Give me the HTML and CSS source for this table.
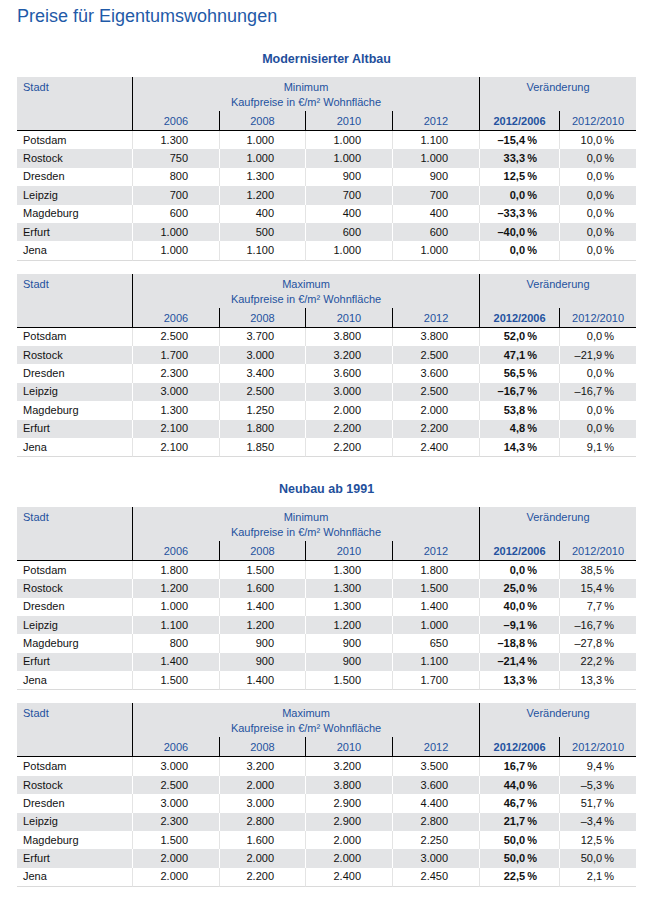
FILE: index.html
```html
<!DOCTYPE html>
<html lang="de">
<head>
<meta charset="utf-8">
<title>Preise für Eigentumswohnungen</title>
<link rel="stylesheet" href="styles.css">
</head>
<body>
<div class="page">
  <h1 class="title">Preise für Eigentumswohnungen</h1>

  <h2 class="section">Modernisierter Altbau</h2>

  <table class="pt">
    <colgroup><col class="c-city"><col class="c-y"><col class="c-y2"><col class="c-y"><col class="c-y"><col class="c-p1"><col class="c-p2"></colgroup>
    <thead>
      <tr class="hr1"><th class="th-city" rowspan="3">Stadt</th><th class="th-grp" colspan="4">Minimum</th><th class="th-chg" colspan="2" rowspan="2">Veränderung</th></tr>
      <tr class="hr2"><th class="th-grp" colspan="4">Kaufpreise in €/m² Wohnfläche</th></tr>
      <tr class="hr3"><th>2006</th><th>2008</th><th>2010</th><th>2012</th><th class="bold">2012/2006</th><th>2012/2010</th></tr>
    </thead>
    <tbody>
      <tr><td>Potsdam</td><td>1.300</td><td>1.000</td><td>1.000</td><td>1.100</td><td>–15,4&thinsp;%</td><td>10,0&thinsp;%</td></tr>
      <tr><td>Rostock</td><td>750</td><td>1.000</td><td>1.000</td><td>1.000</td><td>33,3&thinsp;%</td><td>0,0&thinsp;%</td></tr>
      <tr><td>Dresden</td><td>800</td><td>1.300</td><td>900</td><td>900</td><td>12,5&thinsp;%</td><td>0,0&thinsp;%</td></tr>
      <tr><td>Leipzig</td><td>700</td><td>1.200</td><td>700</td><td>700</td><td>0,0&thinsp;%</td><td>0,0&thinsp;%</td></tr>
      <tr><td>Magdeburg</td><td>600</td><td>400</td><td>400</td><td>400</td><td>–33,3&thinsp;%</td><td>0,0&thinsp;%</td></tr>
      <tr><td>Erfurt</td><td>1.000</td><td>500</td><td>600</td><td>600</td><td>–40,0&thinsp;%</td><td>0,0&thinsp;%</td></tr>
      <tr><td>Jena</td><td>1.000</td><td>1.100</td><td>1.000</td><td>1.000</td><td>0,0&thinsp;%</td><td>0,0&thinsp;%</td></tr>
    </tbody>
  </table>

  <table class="pt">
    <colgroup><col class="c-city"><col class="c-y"><col class="c-y2"><col class="c-y"><col class="c-y"><col class="c-p1"><col class="c-p2"></colgroup>
    <thead>
      <tr class="hr1"><th class="th-city" rowspan="3">Stadt</th><th class="th-grp" colspan="4">Maximum</th><th class="th-chg" colspan="2" rowspan="2">Veränderung</th></tr>
      <tr class="hr2"><th class="th-grp" colspan="4">Kaufpreise in €/m² Wohnfläche</th></tr>
      <tr class="hr3"><th>2006</th><th>2008</th><th>2010</th><th>2012</th><th class="bold">2012/2006</th><th>2012/2010</th></tr>
    </thead>
    <tbody>
      <tr><td>Potsdam</td><td>2.500</td><td>3.700</td><td>3.800</td><td>3.800</td><td>52,0&thinsp;%</td><td>0,0&thinsp;%</td></tr>
      <tr><td>Rostock</td><td>1.700</td><td>3.000</td><td>3.200</td><td>2.500</td><td>47,1&thinsp;%</td><td>–21,9&thinsp;%</td></tr>
      <tr><td>Dresden</td><td>2.300</td><td>3.400</td><td>3.600</td><td>3.600</td><td>56,5&thinsp;%</td><td>0,0&thinsp;%</td></tr>
      <tr><td>Leipzig</td><td>3.000</td><td>2.500</td><td>3.000</td><td>2.500</td><td>–16,7&thinsp;%</td><td>–16,7&thinsp;%</td></tr>
      <tr><td>Magdeburg</td><td>1.300</td><td>1.250</td><td>2.000</td><td>2.000</td><td>53,8&thinsp;%</td><td>0,0&thinsp;%</td></tr>
      <tr><td>Erfurt</td><td>2.100</td><td>1.800</td><td>2.200</td><td>2.200</td><td>4,8&thinsp;%</td><td>0,0&thinsp;%</td></tr>
      <tr><td>Jena</td><td>2.100</td><td>1.850</td><td>2.200</td><td>2.400</td><td>14,3&thinsp;%</td><td>9,1&thinsp;%</td></tr>
    </tbody>
  </table>

  <h2 class="section section-2">Neubau ab 1991</h2>

  <table class="pt">
    <colgroup><col class="c-city"><col class="c-y"><col class="c-y2"><col class="c-y"><col class="c-y"><col class="c-p1"><col class="c-p2"></colgroup>
    <thead>
      <tr class="hr1"><th class="th-city" rowspan="3">Stadt</th><th class="th-grp" colspan="4">Minimum</th><th class="th-chg" colspan="2" rowspan="2">Veränderung</th></tr>
      <tr class="hr2"><th class="th-grp" colspan="4">Kaufpreise in €/m² Wohnfläche</th></tr>
      <tr class="hr3"><th>2006</th><th>2008</th><th>2010</th><th>2012</th><th class="bold">2012/2006</th><th>2012/2010</th></tr>
    </thead>
    <tbody>
      <tr><td>Potsdam</td><td>1.800</td><td>1.500</td><td>1.300</td><td>1.800</td><td>0,0&thinsp;%</td><td>38,5&thinsp;%</td></tr>
      <tr><td>Rostock</td><td>1.200</td><td>1.600</td><td>1.300</td><td>1.500</td><td>25,0&thinsp;%</td><td>15,4&thinsp;%</td></tr>
      <tr><td>Dresden</td><td>1.000</td><td>1.400</td><td>1.300</td><td>1.400</td><td>40,0&thinsp;%</td><td>7,7&thinsp;%</td></tr>
      <tr><td>Leipzig</td><td>1.100</td><td>1.200</td><td>1.200</td><td>1.000</td><td>–9,1&thinsp;%</td><td>–16,7&thinsp;%</td></tr>
      <tr><td>Magdeburg</td><td>800</td><td>900</td><td>900</td><td>650</td><td>–18,8&thinsp;%</td><td>–27,8&thinsp;%</td></tr>
      <tr><td>Erfurt</td><td>1.400</td><td>900</td><td>900</td><td>1.100</td><td>–21,4&thinsp;%</td><td>22,2&thinsp;%</td></tr>
      <tr><td>Jena</td><td>1.500</td><td>1.400</td><td>1.500</td><td>1.700</td><td>13,3&thinsp;%</td><td>13,3&thinsp;%</td></tr>
    </tbody>
  </table>

  <table class="pt">
    <colgroup><col class="c-city"><col class="c-y"><col class="c-y2"><col class="c-y"><col class="c-y"><col class="c-p1"><col class="c-p2"></colgroup>
    <thead>
      <tr class="hr1"><th class="th-city" rowspan="3">Stadt</th><th class="th-grp" colspan="4">Maximum</th><th class="th-chg" colspan="2" rowspan="2">Veränderung</th></tr>
      <tr class="hr2"><th class="th-grp" colspan="4">Kaufpreise in €/m² Wohnfläche</th></tr>
      <tr class="hr3"><th>2006</th><th>2008</th><th>2010</th><th>2012</th><th class="bold">2012/2006</th><th>2012/2010</th></tr>
    </thead>
    <tbody>
      <tr><td>Potsdam</td><td>3.000</td><td>3.200</td><td>3.200</td><td>3.500</td><td>16,7&thinsp;%</td><td>9,4&thinsp;%</td></tr>
      <tr><td>Rostock</td><td>2.500</td><td>2.000</td><td>3.800</td><td>3.600</td><td>44,0&thinsp;%</td><td>–5,3&thinsp;%</td></tr>
      <tr><td>Dresden</td><td>3.000</td><td>3.000</td><td>2.900</td><td>4.400</td><td>46,7&thinsp;%</td><td>51,7&thinsp;%</td></tr>
      <tr><td>Leipzig</td><td>2.300</td><td>2.800</td><td>2.900</td><td>2.800</td><td>21,7&thinsp;%</td><td>–3,4&thinsp;%</td></tr>
      <tr><td>Magdeburg</td><td>1.500</td><td>1.600</td><td>2.000</td><td>2.250</td><td>50,0&thinsp;%</td><td>12,5&thinsp;%</td></tr>
      <tr><td>Erfurt</td><td>2.000</td><td>2.000</td><td>2.000</td><td>3.000</td><td>50,0&thinsp;%</td><td>50,0&thinsp;%</td></tr>
      <tr><td>Jena</td><td>2.000</td><td>2.200</td><td>2.400</td><td>2.450</td><td>22,5&thinsp;%</td><td>2,1&thinsp;%</td></tr>
    </tbody>
  </table>
</div>
</body>
</html>
```

FILE: styles.css
```css
html, body {
  margin: 0;
  padding: 0;
  background: #ffffff;
}

body {
  font-family: "Liberation Sans", Arial, Helvetica, sans-serif;
  color: #111111;
}

.page {
  width: 619px;
  padding: 0 22px 0 17px;
}

.title {
  margin: 5px 0 0 0;
  font-size: 18px;
  line-height: 22px;
  font-weight: normal;
  color: #1f5aa8;
}

.section {
  margin: 24px 0 10px 0;
  font-size: 12.5px;
  line-height: 16px;
  font-weight: bold;
  color: #1f4f9c;
  text-align: center;
}

.section-2 {
  margin-top: 23.6px;
}

.pt {
  width: 619px;
  table-layout: fixed;
  border-collapse: separate;
  border-spacing: 0;
  margin: 0 0 13px 0;
  font-size: 11px;
  line-height: 13px;
}

.c-city { width: 115px; }
.c-y { width: 87px; }
.c-y2 { width: 86px; }
.c-p1 { width: 80px; }
.c-p2 { width: 77px; }

.pt th {
  background: #e2e3e5;
  color: #24529f;
  font-weight: normal;
  vertical-align: top;
  text-align: center;
  padding: 0;
}

.pt th.bold { font-weight: bold; }

.hr1 th { padding-top: 4px; }
.hr2 th { padding-top: 2px; padding-bottom: 2px; }
.hr3 th {
  padding-top: 4px;
  padding-bottom: 2px;
  border-left: 1px solid #000000;
  border-bottom: 1px solid #000000;
}
.hr3 th:last-child { border-left: 1px solid #000000; }
.hr3 th:nth-child(3),
.hr3 th:nth-child(4),
.hr3 th:nth-child(2) { border-left: 1px solid #000000; }

.pt th.th-city {
  text-align: left;
  padding-left: 6px;
  border-bottom: 1px solid #000000;
}

.pt th.th-grp { border-left: 1px solid #000000; }
.pt th.th-chg { border-left: 1px solid #000000; }

.pt td {
  padding: 2.7px 0;
  text-align: right;
  white-space: nowrap;
  border-left: 1px solid #e4e4e4;
}

.pt td:first-child {
  text-align: left;
  padding-left: 6px;
  border-left: none;
}

.pt td:nth-child(2),
.pt td:nth-child(3),
.pt td:nth-child(4),
.pt td:nth-child(5) { padding-right: 31px; }

.pt td:nth-child(6) {
  padding-right: 22px;
  font-weight: bold;
}

.pt td:nth-child(7) { padding-right: 22px; }

.pt tbody tr:nth-child(even) td {
  background: #e3e4e6;
  border-left-color: #ffffff;
}

.pt tbody tr:nth-child(even) td:first-child { border-left: none; }

.pt tbody tr:last-child td { border-bottom: 1px solid #dadada; }
```
